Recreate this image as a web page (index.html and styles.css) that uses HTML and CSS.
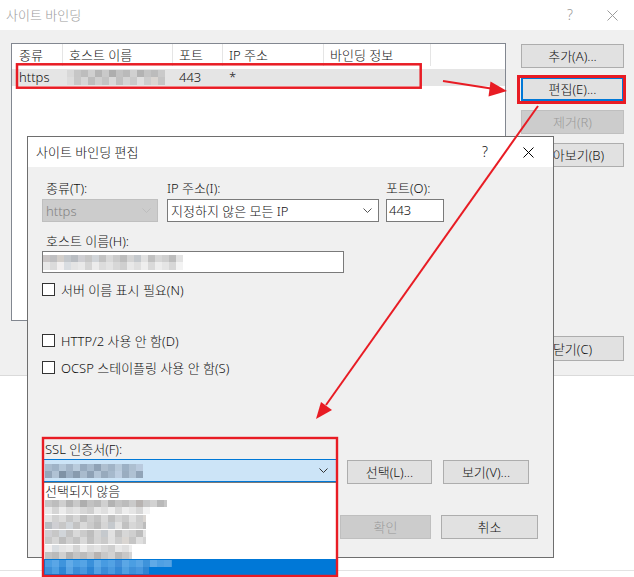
FILE: index.html
```html
<!DOCTYPE html>
<html lang="ko">
<head>
<meta charset="utf-8">
<title>사이트 바인딩</title>
<link rel="stylesheet" href="styles.css">
</head>
<body>
<div class="screen">
  <div class="win">
    <div class="titlebar">
      <span class="title muted">사이트 바인딩</span>
      <span class="tb-btn help-main muted">?</span>
      <span class="tb-btn close-main"><svg width="11" height="11" viewBox="0 0 11 11"><path d="M0.5 0.5 L10.5 10.5 M10.5 0.5 L0.5 10.5" stroke="#9b9b9b" stroke-width="1" fill="none"/></svg></span>
    </div>
    <div class="win-body">
      <div class="listview">
        <div class="lv-header">
          <div class="lv-col w1">종류</div>
          <div class="lv-col w2">호스트 이름</div>
          <div class="lv-col w3">포트</div>
          <div class="lv-col w4">IP 주소</div>
          <div class="lv-col w5">바인딩 정보</div>
        </div>
        <div class="lv-row">
          <div class="lv-cell w1">https</div>
          <div class="lv-cell w2 host-cell"><span class="mosaic m-row"></span></div>
          <div class="lv-cell w3">443</div>
          <div class="lv-cell w4">*</div>
        </div>
      </div>
      <div class="side">
        <button class="btn">추가(A)...</button>
        <button class="btn default">편집(E)...</button>
        <button class="btn" disabled>제거(R)</button>
        <button class="btn">찾아보기(B)</button>
        <button class="btn close-btn">닫기(C)</button>
      </div>
    </div>
    <div class="win-foot"></div>
  </div>

  <div class="dialog">
    <div class="titlebar">
      <span class="title dlg-title">사이트 바인딩 편집</span>
      <span class="tb-btn help-dlg">?</span>
      <span class="tb-btn close-dlg"><svg width="11" height="11" viewBox="0 0 11 11"><path d="M0.5 0.5 L10.5 10.5 M10.5 0.5 L0.5 10.5" stroke="#000" stroke-width="1" fill="none"/></svg></span>
    </div>
    <div class="dlg-body">
      <div class="grid3">
        <div class="lbl indent">종류(T):</div>
        <div class="lbl">IP 주소(I):</div>
        <div class="lbl">포트(O):</div>
        <div class="combo disabled w-type"><span class="combo-text">https</span><svg class="chev" width="9" height="5" viewBox="0 0 9 5"><path d="M0.5 0.5 L4.5 4.5 L8.5 0.5" fill="none" stroke="#bdbdbd" stroke-width="1"/></svg></div>
        <div class="combo w-ip"><span class="combo-text">지정하지 않은 모든 IP</span><svg class="chev" width="9" height="5" viewBox="0 0 9 5"><path d="M0.5 0.5 L4.5 4.5 L8.5 0.5" fill="none" stroke="#555" stroke-width="1"/></svg></div>
        <div class="textbox port">443</div>
      </div>
      <div class="lbl indent host-lbl">호스트 이름(H):</div>
      <div class="textbox host"><span class="mosaic m-host"></span></div>
      <div class="check c1"><span class="box"></span><span>서버 이름 표시 필요(N)</span></div>
      <div class="check c2"><span class="box"></span><span>HTTP/2 사용 안 함(D)</span></div>
      <div class="check c3"><span class="box"></span><span>OCSP 스테이플링 사용 안 함(S)</span></div>
      <div class="lbl ssl-lbl">SSL 인증서(F):</div>
      <div class="ssl-row">
        <div class="combo ssl">
          <span class="combo-text"><span class="mosaic m-ssl"></span></span>
          <svg class="chev" width="9" height="5" viewBox="0 0 9 5"><path d="M0.5 0.5 L4.5 4.5 L8.5 0.5" fill="none" stroke="#333" stroke-width="1"/></svg>
          <div class="dropdown">
            <div class="dd-item">선택되지 않음</div>
            <div class="dd-item"><span class="mosaic m-d1"></span></div>
            <div class="dd-item"><span class="mosaic m-d2"></span></div>
            <div class="dd-item"><span class="mosaic m-d3"></span></div>
            <div class="dd-item"><span class="mosaic m-d4"></span></div>
            <div class="dd-item sel"><span class="m-sel"><span class="m-sel1"></span><span class="m-sel2"></span></span></div>
          </div>
        </div>
        <button class="btn pick">선택(L)...</button>
        <button class="btn view">보기(V)...</button>
      </div>
      <div class="actions">
        <button class="btn ok" disabled>확인</button>
        <button class="btn cancel">취소</button>
      </div>
    </div>
  </div>

  <svg class="annot" width="634" height="577" viewBox="0 0 634 577">
    <g fill="none" stroke="#e81c24">
      <rect x="17" y="64.3" width="403.7" height="23.4" stroke-width="2.5"/>
      <rect x="518.5" y="76.5" width="106" height="26" stroke-width="3"/>
      <rect x="43" y="438" width="294" height="138" stroke-width="2.4"/>
      <line x1="443" y1="81" x2="491" y2="88.5" stroke-width="2"/>
      <line x1="538" y1="106" x2="326" y2="405" stroke-width="2"/>
    </g>
    <g fill="#e81c24">
      <polygon points="507,91 488.5,96.5 490.5,81.5"/>
      <polygon points="316,419 321,402 332,410"/>
    </g>
  </svg>
</div>
</body>
</html>
```

FILE: styles.css
```css
:root {
  --mg1: linear-gradient(90deg, #c9c5c5 0 7px, #bfbfc1 7px 14px, #d3cfcb 14px 21px, #c4c8cc 21px 28px, #b9bdc2 28px 35px, #cfcfd3 35px 42px, #c7c7c7 42px 49px, #d1d5d9 49px 56px, #c3c3c3 56px 63px, #d9d9d9 63px 70px, #cbcbcb 70px 77px, #bdbdbd 77px 84px, #d5d5d5 84px 91px, #c5c9cd 91px 98px, #e1e1e1 98px 105px, #c1c1c1 105px 112px, #d7d7d7 112px 119px, #cfcfcf 119px 126px, #bdbdbd 126px 133px, #e3e3e3 133px 140px);
  --mg2: linear-gradient(90deg, #e7e7e7 0 7px, #dbdbdb 7px 14px, #f1efef 14px 21px, #d9dde1 21px 28px, #e4e4e4 28px 35px, #e9e9e9 35px 42px, #d5d5d5 42px 49px, #ececec 49px 56px, #dcdcdc 56px 63px, #e3e3e3 63px 70px, #d7d7d7 70px 77px, #cfcfcf 77px 84px, #e8e8e8 84px 91px, #dfdfdf 91px 98px, #eeeeee 98px 105px, #d9d9d9 105px 112px, #ededed 112px 119px, #e5e5e5 119px 126px, #d7d7d7 126px 133px, #f3f3f3 133px 140px);
  --mg3: linear-gradient(90deg, #d8d8d8 0 7px, #c6c6c6 7px 14px, #bdbdbd 14px 21px, #cfcfcf 21px 28px, #b5b5b5 28px 35px, #c9c9c9 35px 42px, #aeaeae 42px 49px, #c2c2c2 49px 56px, #bababa 56px 63px, #d0d0d0 63px 70px, #b3b3b3 70px 77px, #c4c4c4 77px 84px, #bcbcbc 84px 91px, #cacaca 91px 98px, #b7b3b1 98px 105px, #c8c8c8 105px 112px, #d2d2d2 112px 119px, #b9b9b9 119px 126px, #c7c7c7 126px 133px, #d4d4d4 133px 140px);
  --mg4: linear-gradient(90deg, #e3e3e3 0 7px, #d1d1d1 7px 14px, #dcdcdc 14px 21px, #c7c7c7 21px 28px, #d6d6d6 28px 35px, #bdbdbd 35px 42px, #cfcfcf 42px 49px, #c3c3c3 49px 56px, #d9d9d9 56px 63px, #c0c0c0 63px 70px, #d4d4d4 70px 77px, #cacaca 77px 84px, #e0e0e0 84px 91px, #cdcdcd 91px 98px, #dad6d2 98px 105px, #c5c5c5 105px 112px, #dfdfdf 112px 119px, #d3d3d3 119px 126px, #e6e6e6 126px 133px, #d8d8d8 133px 140px);
  --mb1: linear-gradient(90deg, #a9bccf 0 7px, #9fb3c7 7px 14px, #b4c7d9 14px 21px, #a3b5c8 21px 28px, #b9cbdc 28px 35px, #98abbf 35px 42px, #a7bacd 42px 49px, #8fa2b6 49px 56px, #aebfd0 56px 63px, #a1b4c7 63px 70px, #b7c9da 70px 77px, #9cb0c4 77px 84px, #adbfd1 84px 91px, #b9cade 91px 98px, #a5b8cb 98px 105px, #b3c5d7 105px 112px, #9eb1c5 112px 119px, #aabdd0 119px 126px, #b6c8da 126px 133px, #a0b3c6 133px 140px);
  --mb2: linear-gradient(90deg, #b5c8db 0 7px, #8c9fb2 7px 14px, #a4b6c9 14px 21px, #93a6ba 21px 28px, #b0c2d4 28px 35px, #7f92a5 35px 42px, #9bafc3 42px 49px, #889bae 49px 56px, #a9bbcd 56px 63px, #8ea1b5 63px 70px, #b2c4d6 70px 77px, #97aabd 77px 84px, #a6b9cc 84px 91px, #bccde0 91px 98px, #9aadc0 98px 105px, #afc1d3 105px 112px, #91a4b8 112px 119px, #a8bace 119px 126px, #b8cadc 126px 133px, #9db0c3 133px 140px);
  --ms1: linear-gradient(90deg, #4a9de2 0 7px, #5aa6e6 7px 14px, #3f94dc 14px 21px, #62abe8 21px 28px, #4d9fe3 28px 35px, #56a4e5 35px 42px, #3a90da 42px 49px, #5ea9e7 49px 56px, #489be1 56px 63px, #53a2e4 63px 70px, #428fd9 70px 77px, #5ba7e6 77px 84px, #4b9ee2 84px 91px, #59a5e5 91px 98px, #3e93db 98px 105px, #60aae7 105px 112px, #4fa0e3 112px 119px, #55a3e4 119px 126px, #449ae0 126px 133px, #5ca8e6 133px 140px);
  --ms2: linear-gradient(90deg, #3d8fd8 0 7px, #4e9fe2 7px 14px, #2f86d4 14px 21px, #5aa5e5 21px 28px, #3b8dd7 28px 35px, #4898df 35px 42px, #2c84d3 42px 49px, #53a1e3 49px 56px, #3a8cd7 56px 63px, #4a9ae0 63px 70px, #3488d5 70px 77px, #50a0e2 77px 84px, #3e90d9 84px 91px, #4797df 91px 98px, #2e85d3 98px 105px, #55a2e3 105px 112px, #3f91d9 112px 119px, #4b9be0 119px 126px, #3589d5 126px 133px, #529fe2 133px 140px);
}

* { box-sizing: border-box; }

html, body { margin: 0; padding: 0; }

body {
  width: 634px;
  height: 577px;
  overflow: hidden;
  background: #fff;
  font-family: "Noto Sans", "Noto Sans CJK KR", sans-serif;
  font-size: 13px;
  font-weight: 300;
  line-height: 16px;
  color: #111;
}

.screen {
  position: relative;
  width: 634px;
  height: 577px;
  overflow: hidden;
}

/* ---------- title bars ---------- */
.titlebar {
  display: flex;
  align-items: center;
  height: 30px;
  background: #fff;
}
.title { flex: 1; padding-left: 6px; white-space: nowrap; }
.muted { color: #9b9b9b; }
.tb-btn {
  display: flex;
  align-items: center;
  justify-content: center;
  height: 30px;
  font-size: 14px;
}
.help-main { width: 40px; }
.close-main { width: 44px; }

/* ---------- main window ---------- */
.win-body {
  display: flex;
  height: 346px;
  padding-left: 11px;
  background: #f0f0f0;
  border-bottom: 1px solid #dadada;
}

.listview {
  margin-top: 13px;
  width: 495px;
  height: 278px;
  background: #fff;
  border: 1px solid #828790;
}
.lv-header { display: flex; height: 22px; }
.lv-col {
  height: 22px;
  line-height: 22px;
  padding-left: 6px;
  border-right: 1px solid #e5e5e5;
  white-space: nowrap;
}
.lv-col.w1, .lv-cell.w1 { width: 51px; padding-left: 7px; }
.w2 { width: 110px; }
.w3 { width: 50px; }
.w4 { width: 101px; }
.w5 { width: 107px; }

.lv-row {
  display: flex;
  height: 17px;
  margin-top: 3px;
  background: #e5e5e5;
}
.lv-cell {
  line-height: 17px;
  padding-left: 6px;
  white-space: nowrap;
}
.host-cell { display: flex; align-items: center; padding-left: 4px; }

.side {
  display: flex;
  flex-direction: column;
  gap: 9px;
  width: 103px;
  margin-left: 15px;
  padding: 14px 0;
}
.side .close-btn { margin-top: auto; height: 25px; }

.btn {
  font: inherit;
  line-height: 16px;
  height: 24px;
  padding: 0;
  margin: 0;
  background: #e1e1e1;
  border: 1px solid #adadad;
  border-radius: 0;
  color: #111;
  white-space: nowrap;
}
.btn.default { border: 2px solid #0078d7; }
.btn:disabled {
  background: #cccccc;
  border-color: #bfbfbf;
  color: #9a9a9a;
}

.win-foot {
  height: 195px;
  border-bottom: 1px solid #e3e3e3;
}

/* ---------- dialog ---------- */
.dialog {
  position: absolute;
  left: 27px;
  top: 136px;
  width: 527px;
  height: 422px;
  border: 1px solid #6e6e6e;
  background: #f0f0f0;
  z-index: 5;
}
.dlg-title { padding-left: 8px; }
.help-dlg { width: 36px; }
.close-dlg { width: 50px; }

.dlg-body {
  display: flex;
  flex-direction: column;
  align-items: flex-start;
  padding: 13px 15px 0 14px;
}

.grid3 {
  display: grid;
  grid-template-columns: 125px 219px 58px;
  row-gap: 3px;
}
.lbl { height: 16px; white-space: nowrap; }
.indent { padding-left: 4px; }

.combo {
  display: flex;
  align-items: center;
  height: 23px;
  padding: 0 6px 0 3px;
  background: #fff;
  border: 1px solid #7a7a7a;
  white-space: nowrap;
}
.combo-text { flex: 1; display: flex; align-items: center; }
.chev { flex: none; }
.w-type { width: 116px; }
.w-ip { width: 212px; }
.combo.disabled {
  background: #cccccc;
  border-color: #bfbfbf;
  color: #838383;
}

.textbox {
  height: 23px;
  background: #fff;
  border: 1px solid #7a7a7a;
  line-height: 21px;
}
.port { width: 58px; padding-left: 2px; }

.host-lbl { margin-top: 11px; }
.host {
  display: flex;
  align-items: center;
  width: 302px;
  height: 22px;
  margin-top: 2px;
}

.check {
  display: flex;
  align-items: center;
  gap: 6px;
  height: 13px;
  white-space: nowrap;
}
.check .box {
  width: 13px;
  height: 13px;
  background: #fff;
  border: 1px solid #333;
}
.c1 { margin-top: 10px; }
.c2 { margin-top: 38px; }
.c3 { margin-top: 14px; }

.ssl-lbl { margin-top: 67px; padding-left: 3px; }

.ssl-row {
  display: flex;
  align-items: flex-start;
  margin-top: 2px;
}
.combo.ssl {
  position: relative;
  width: 295px;
  padding: 0 8px 0 2px;
  background: #cce4f7;
  border-color: #0078d7;
}
.btn.pick { width: 85px; margin: 1px 0 0 10px; }
.btn.view { width: 86px; margin: 1px 0 0 11px; }

.dropdown {
  position: absolute;
  left: -1px;
  top: 22px;
  width: 295px;
  height: 94px;
  padding-top: 1px;
  background: #fff;
  border: 1px solid #7a7a7a;
  z-index: 6;
}
.dd-item {
  display: flex;
  align-items: center;
  height: 15px;
  padding-left: 2px;
  line-height: 15px;
  white-space: nowrap;
}
.dd-item.sel { height: 16px; background: #0078d7; }

.actions {
  display: flex;
  justify-content: flex-end;
  gap: 10px;
  align-self: stretch;
  margin-top: 31px;
}
.btn.ok { width: 91px; }
.btn.cancel { width: 97px; }

/* ---------- pixelated (blurred) content ---------- */
.mosaic { display: block; flex: none; }
.m-row {
  width: 98px;
  height: 15px;
  background: var(--mg3) 0 0 / 140px 7px no-repeat, var(--mg4) -14px 7px / 140px 8px no-repeat;
}
.m-host {
  width: 140px;
  height: 15px;
  background: var(--mg1) 0 0 / 140px 7px no-repeat, var(--mg2) 0 7px / 140px 8px no-repeat;
}
.m-ssl {
  width: 98px;
  height: 14px;
  background: var(--mb1) 0 0 / 140px 7px no-repeat, var(--mb2) -21px 7px / 140px 7px no-repeat;
}
.m-d1 {
  width: 122px;
  height: 14px;
  background: var(--mg3) -7px 0 / 140px 7px no-repeat, var(--mg2) -35px 7px / 140px 7px no-repeat;
}
.m-d2 {
  width: 101px;
  height: 14px;
  background: var(--mg4) 0 0 / 140px 7px no-repeat, var(--mg1) -28px 7px / 140px 7px no-repeat;
}
.m-d3 {
  width: 101px;
  height: 14px;
  background: var(--mg1) -35px 0 / 140px 7px no-repeat, var(--mg4) -21px 7px / 140px 7px no-repeat;
}
.m-d4 {
  width: 87px;
  height: 14px;
  background: var(--mg2) -14px 0 / 140px 7px no-repeat, var(--mg3) -49px 7px / 140px 7px no-repeat;
}
.m-sel { display: flex; flex-direction: column; }
.m-sel1 { display: block; width: 127px; height: 7px; background: var(--ms1) 0 0 / 140px 7px no-repeat; }
.m-sel2 { display: block; width: 104px; height: 7px; background: var(--ms2) 0 0 / 140px 7px no-repeat; }

/* ---------- annotation overlay ---------- */
.annot {
  position: absolute;
  left: 0;
  top: 0;
  pointer-events: none;
  z-index: 10;
}
```
